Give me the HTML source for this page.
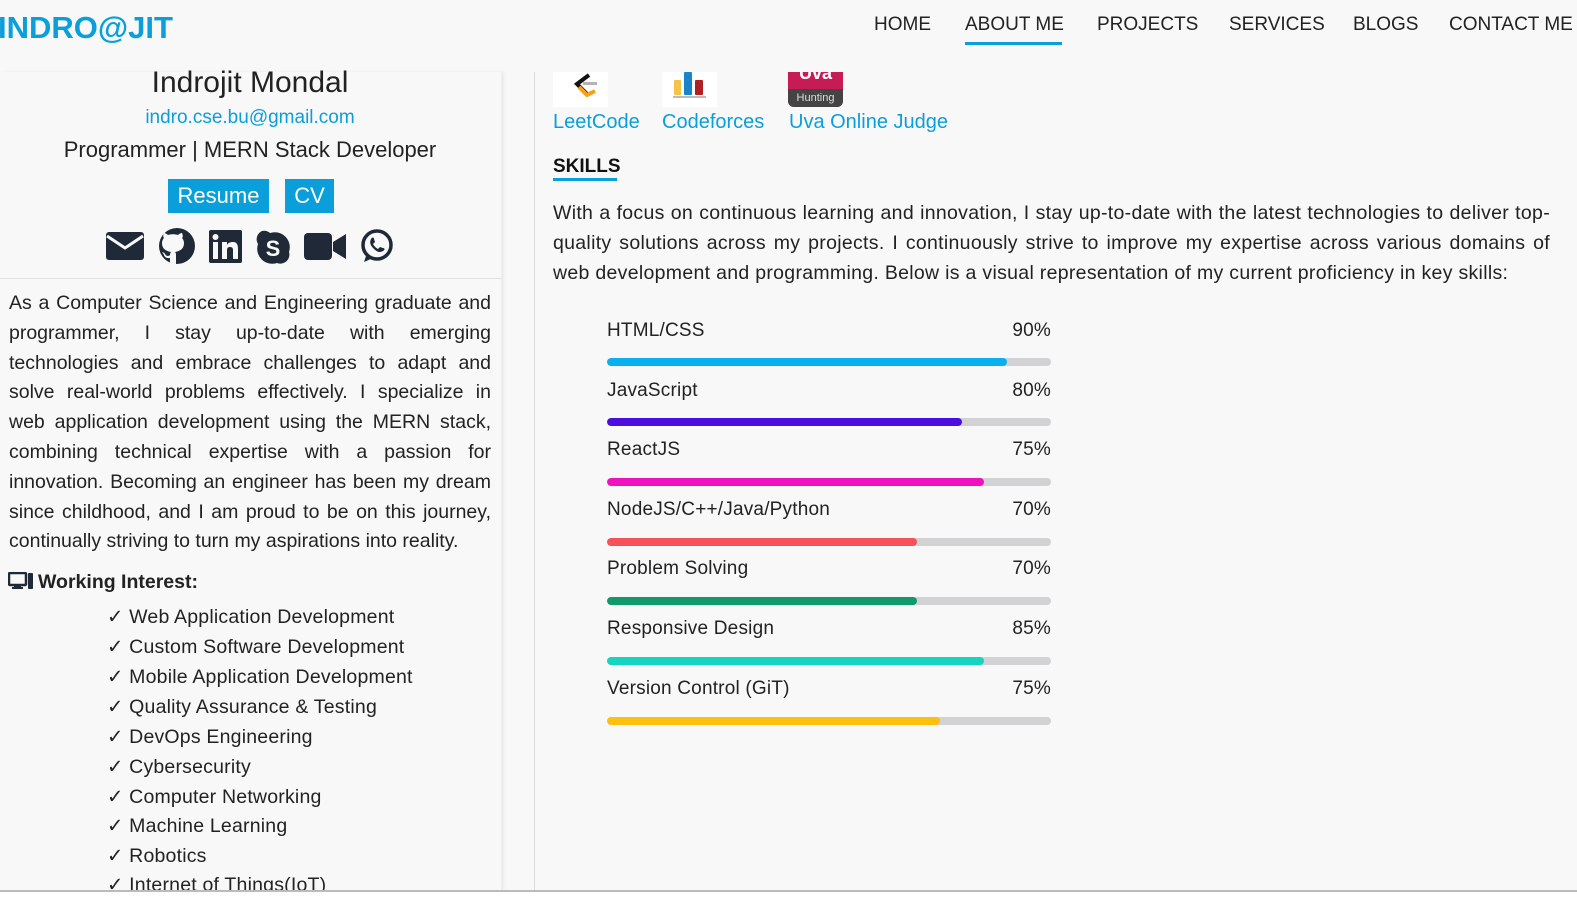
<!DOCTYPE html>
<html><head><style>
*{margin:0;padding:0;box-sizing:border-box}
body{width:1577px;height:897px;overflow:hidden;background:#f8f8f8;font-family:"Liberation Sans",sans-serif;color:#222;position:relative}
.logo{position:absolute;left:-2px;top:10px;font-size:31px;font-weight:bold;color:#0a9fdb;letter-spacing:0px}
.nav{position:absolute;top:14px;font-size:19px;color:#222}
.left{position:absolute;left:0;top:72px;width:502px;height:818px;background:#f8f8f8;box-shadow:2px 0 3px rgba(0,0,0,.06);border-right:1px solid #eee}
.c{text-align:center;position:absolute;left:0;width:500px}
.vline{position:absolute;left:534px;top:72px;width:1px;height:818px;background:#ddd}
.bottom{position:absolute;left:0;top:890px;width:1577px;height:7px;background:#fff;border-top:2px solid #bbb}
.para{position:absolute;left:9px;top:289px;width:482px;font-size:19.5px;line-height:29.8px;color:#222}
.para span{display:block;text-align:justify;text-align-last:justify;white-space:nowrap}
.para span.l{text-align-last:left}
.li{position:absolute;left:107px;font-size:19.5px;color:#222;letter-spacing:0.2px}
.sk{position:absolute;left:607px;width:444px;font-size:19px;letter-spacing:0.2px}
.sk .p{position:absolute;right:0;top:0}
.bar{position:absolute;left:607px;width:444px;height:8px;border-radius:4px;background:#d2d2d4;overflow:hidden}
.bar div{height:8px;border-radius:4px}
a{color:#0a9fdb;text-decoration:none}
</style></head><body>
<div class="logo">INDRO@JIT</div>
<div class="nav" style="left:874px">HOME</div>
<div class="nav" style="left:965px">ABOUT ME</div>
<div style="position:absolute;left:965px;top:42px;width:97px;height:3px;background:#0a9fdb"></div>
<div class="nav" style="left:1097px">PROJECTS</div>
<div class="nav" style="left:1229px">SERVICES</div>
<div class="nav" style="left:1353px">BLOGS</div>
<div class="nav" style="left:1449px">CONTACT ME</div>

<div class="left"></div>
<div class="c" style="top:66px;font-size:30px;color:#222">Indrojit Mondal</div>
<div class="c" style="top:107px;font-size:19px;color:#0a9fdb">indro.cse.bu@gmail.com</div>
<div class="c" style="top:137px;font-size:22px;color:#222">Programmer | MERN Stack Developer</div>
<div style="position:absolute;left:168px;top:179px;width:101px;height:34px;background:#0a9fdb;color:#fff;font-size:22px;text-align:center;line-height:34px">Resume</div>
<div style="position:absolute;left:285px;top:179px;width:49px;height:34px;background:#0a9fdb;color:#fff;font-size:22px;text-align:center;line-height:34px">CV</div>
<svg style="position:absolute;left:105px;top:228px" width="295" height="36" viewBox="0 0 295 36" fill="#1f2937">
<rect x="1" y="4" width="38" height="28" rx="3"/><path d="M2 8 L20 20 L38 8" stroke="#f8f8f8" stroke-width="3" fill="none"/>
<circle cx="72" cy="18" r="18"/><path d="M65 36v-6c-5 1-6-3-6-3-1-2-2-3-2-3 2 0 3 2 3 2 2 3 4 2 5 1 0-2 1-3 1-3-5-1-9-3-9-9 0-2 1-4 2-5-1-1-1-3 0-5 2 0 4 2 4 2 3-1 7-1 10 0 0 0 2-2 4-2 1 2 1 4 0 5 1 1 2 3 2 5 0 6-4 8-9 9 1 1 1 2 1 4v8z" fill="#f8f8f8"/>
<rect x="104" y="2" width="33" height="33" rx="2"/><rect x="108" y="14" width="5" height="17" fill="#f8f8f8"/><circle cx="110.5" cy="9" r="3" fill="#f8f8f8"/><path d="M117 14h5v3c1-2 3-3 6-3 4 0 5 3 5 7v10h-5v-9c0-2-1-3-3-3s-3 1-3 3v9h-5z" fill="#f8f8f8"/>
<path d="M157 3a9 9 0 0 1 8 2a15 15 0 0 1 19 19a9 9 0 0 1-12 11a15 15 0 0 1-19-19a9 9 0 0 1 4-13z"/><text x="168" y="28" font-size="22" font-weight="bold" fill="#f8f8f8" text-anchor="middle" font-family="Liberation Sans">S</text>
<rect x="199" y="5" width="28" height="27" rx="4"/><path d="M228 14l13-8v25l-13-8z"/>
<circle cx="272" cy="17" r="14" fill="none" stroke="#1f2937" stroke-width="3.5"/><path d="M259 34l3-9 6 5z"/><path d="M266 11c1-2 3-2 3 0l1 3-2 2c1 2 3 4 5 5l2-2 3 1c2 0 2 2 0 3-3 2-6 1-9-2s-5-6-3-10z"/>
</svg>
<div style="position:absolute;left:0;top:278px;width:502px;height:1px;background:#e2e2e2"></div>
<div class="para">
<span>As a Computer Science and Engineering graduate and</span>
<span>programmer, I stay up-to-date with emerging</span>
<span>technologies and embrace challenges to adapt and</span>
<span>solve real-world problems effectively. I specialize in</span>
<span>web application development using the MERN stack,</span>
<span>combining technical expertise with a passion for</span>
<span>innovation. Becoming an engineer has been my dream</span>
<span>since childhood, and I am proud to be on this journey,</span>
<span class="l">continually striving to turn my aspirations into reality.</span>
</div>
<svg style="position:absolute;left:8px;top:572px" width="26" height="18" viewBox="0 0 26 18" fill="#1f2937"><rect x="1" y="1" width="17" height="12" rx="1" fill="none" stroke="#1f2937" stroke-width="2.5"/><rect x="6" y="13" width="7" height="2"/><rect x="4" y="15" width="11" height="2"/><rect x="20" y="1" width="5" height="16" rx="1"/></svg>
<div style="position:absolute;left:38px;top:571px;font-size:19.5px;font-weight:bold;color:#222">Working Interest:</div>
<div class="li" style="top:605px">✓ Web Application Development</div>
<div class="li" style="top:635px">✓ Custom Software Development</div>
<div class="li" style="top:665px">✓ Mobile Application Development</div>
<div class="li" style="top:695px">✓ Quality Assurance &amp; Testing</div>
<div class="li" style="top:725px">✓ DevOps Engineering</div>
<div class="li" style="top:755px">✓ Cybersecurity</div>
<div class="li" style="top:785px">✓ Computer Networking</div>
<div class="li" style="top:814px">✓ Machine Learning</div>
<div class="li" style="top:844px">✓ Robotics</div>
<div class="li" style="top:873px">✓ Internet of Things(IoT)</div>

<div class="vline"></div>
<div style="position:absolute;left:553px;top:72px;width:55px;height:35px;background:#fff"><svg width="55" height="35"><path d="M36 3L24 12L34 22" stroke="#111" stroke-width="4" fill="none"/><path d="M26 15l8 8 8-4" stroke="#f89f1b" stroke-width="4" fill="none"/><rect x="30" y="10" width="14" height="3" fill="#b3b3b3"/></svg></div>
<div style="position:absolute;left:662px;top:72px;width:55px;height:35px;background:#fff"><svg width="55" height="35"><rect x="12" y="8" width="7" height="15" rx="1" fill="#f6c344"/><rect x="22" y="0" width="8" height="23" rx="1" fill="#1a84c9"/><rect x="33" y="8" width="8" height="15" rx="1" fill="#b21f23"/><rect x="11" y="24" width="33" height="2" fill="#bbb"/></svg></div>
<div style="position:absolute;left:788px;top:72px;width:55px;height:35px;background:#c71b56;border-radius:0 0 6px 6px;overflow:hidden"><div style="position:absolute;top:-9px;width:55px;text-align:center;color:#fff;font-weight:bold;font-size:18px">Uva</div><div style="position:absolute;top:17px;width:55px;height:18px;background:#444;color:#ddd;font-size:11px;text-align:center;line-height:18px">Hunting</div></div>
<a style="position:absolute;left:553px;top:111px;font-size:20px">LeetCode</a>
<a style="position:absolute;left:662px;top:111px;font-size:20px">Codeforces</a>
<a style="position:absolute;left:789px;top:111px;font-size:20px">Uva Online Judge</a>
<div style="position:absolute;left:553px;top:156px;font-size:19px;font-weight:bold;color:#111">SKILLS</div>
<div style="position:absolute;left:553px;top:178px;width:64px;height:3px;background:#0a9fdb"></div>
<div style="position:absolute;left:553px;top:198px;width:997px;font-size:19.5px;line-height:30px;text-align:justify;color:#222;letter-spacing:0.3px">With a focus on continuous learning and innovation, I stay up-to-date with the latest technologies to deliver top-quality solutions across my projects. I continuously strive to improve my expertise across various domains of web development and programming. Below is a visual representation of my current proficiency in key skills:</div>

<div class="sk" style="top:320px">HTML/CSS<span class="p">90%</span></div><div class="bar" style="top:358px"><div style="width:400px;background:#0ab0ee"></div></div>
<div class="sk" style="top:380px">JavaScript<span class="p">80%</span></div><div class="bar" style="top:418px"><div style="width:355px;background:#4a0fe0"></div></div>
<div class="sk" style="top:439px">ReactJS<span class="p">75%</span></div><div class="bar" style="top:478px"><div style="width:377px;background:#f010c0"></div></div>
<div class="sk" style="top:499px">NodeJS/C++/Java/Python<span class="p">70%</span></div><div class="bar" style="top:538px"><div style="width:310px;background:#f5525c"></div></div>
<div class="sk" style="top:558px">Problem Solving<span class="p">70%</span></div><div class="bar" style="top:597px"><div style="width:310px;background:#10996a"></div></div>
<div class="sk" style="top:618px">Responsive Design<span class="p">85%</span></div><div class="bar" style="top:657px"><div style="width:377px;background:#15d4c0"></div></div>
<div class="sk" style="top:678px">Version Control (GiT)<span class="p">75%</span></div><div class="bar" style="top:717px"><div style="width:333px;background:#fdbf10"></div></div>
<div class="bottom"></div>
</body></html>
